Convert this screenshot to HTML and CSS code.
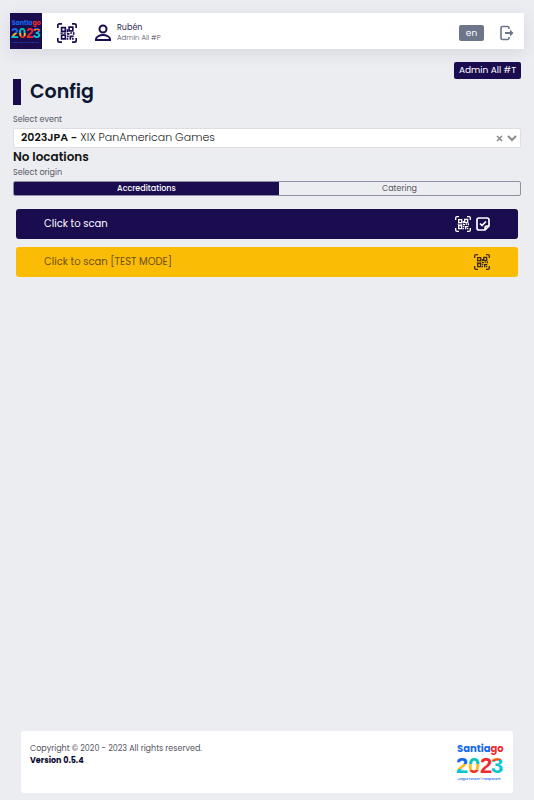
FILE: index.html
```
<!DOCTYPE html>
<html lang="en">
<head>
    <meta charset="UTF-8">
    <title>Config</title>
    <meta name="viewport" content="width=device-width, initial-scale=1.0">
    <link rel="stylesheet" href="styles.css">
</head>
<body>
    <!-- Shared icons -->
    <svg class="sprite" aria-hidden="true">
        <symbol id="icon-qr" viewBox="0 0 24 24">
            <path d="M1 6V3q0-2 2-2h3M18 1h3q2 0 2 2v3M23 18v3q0 2-2 2h-3M6 23H3q-2 0-2-2v-3" fill="none" stroke="currentColor" stroke-width="2"/>
            <path d="M5.500 5.500h4.500v4.500h-4.500zM14.500 5h4.500v4.500h-4.500zM5.500 14.500h4.500v4.500h-4.500z" fill="none" stroke="currentColor" stroke-width="2"/>
            <path d="M11.500 7.500h2v3.500h-2zM4 11.500h3v1.500H4zM8 11.500h3v1.500H8zM12 12h3v2h-3zM16 11h2v2h-2zM19 11h2v3h-2zM12 15h2v2h-2zM15 15h5v2h-5zM15 17h2v3h-2zM18 18h2v2h-2zM11.500 18h2v2h-2z" fill="currentColor"/>
        </symbol>
        <linearGradient id="n1" x1="0" y1="0" x2="0.300" y2="1">
            <stop offset="0.450" stop-color="#1268ee"/>
            <stop offset="0.450" stop-color="#fbb91e"/>
            <stop offset="0.620" stop-color="#fbb91e"/>
            <stop offset="0.620" stop-color="#08c4cc"/>
        </linearGradient>
        <linearGradient id="n2" x1="0" y1="0" x2="0" y2="1">
            <stop offset="0.420" stop-color="#08c4ba"/>
            <stop offset="0.420" stop-color="#fbbe2c"/>
            <stop offset="0.660" stop-color="#fbbe2c"/>
            <stop offset="0.660" stop-color="#f13124"/>
        </linearGradient>
        <linearGradient id="n3" x1="0" y1="0" x2="1" y2="0.300">
            <stop offset="0.500" stop-color="#1268ee"/>
            <stop offset="0.500" stop-color="#f02b2d"/>
        </linearGradient>
        <linearGradient id="n4" x1="0" y1="0" x2="0.300" y2="1">
            <stop offset="0.400" stop-color="#1268ee"/>
            <stop offset="0.400" stop-color="#f6a51e"/>
            <stop offset="0.520" stop-color="#f02b2d"/>
            <stop offset="0.520" stop-color="#08c4cc"/>
        </linearGradient>
    </svg>

    <header class="topbar">
        <a class="brand" href="#" aria-label="Santiago 2023">
            <svg class="brand-logo" viewBox="0 0 48 40">
                <text x="1" y="10" class="logo-city">Santia<tspan class="logo-go">go</tspan></text>
                <text y="31" class="logo-year"><tspan x="0" fill="url(#n1)">2</tspan><tspan x="12" fill="url(#n2)">0</tspan><tspan x="24" fill="url(#n3)">2</tspan><tspan x="35" fill="url(#n4)">3</tspan></text>
                <text x="1" y="38" class="logo-games">Juegos PanAm<tspan class="logo-go"> | </tspan>ParapanAm</text>
            </svg>
        </a>
        <button class="icon-btn" type="button" aria-label="Scan">
            <svg width="20" height="20"><use href="#icon-qr"/></svg>
        </button>
        <div class="user">
            <svg width="18" height="18" viewBox="0 0 18 18" fill="none" stroke="currentColor" stroke-width="2">
                <circle cx="9" cy="5" r="3.500"/>
                <path d="M2 16v-1c0-2 3.500-4 7-4s7 2 7 4v1z"/>
            </svg>
            <div class="user-info">
                <div class="user-name">Rubén</div>
                <div class="user-role">Admin All #P</div>
            </div>
        </div>
        <button class="lang" type="button">en</button>
        <button class="icon-btn logout" type="button" aria-label="Log out">
            <svg width="16" height="16" viewBox="0 0 16 16">
                <path d="M10 4V3q0-1.500-1.500-1.500h-5Q2 1.500 2 3v10q0 1.500 1.500 1.500h5Q10 14.500 10 13v-1" fill="none" stroke="currentColor" stroke-width="1.600"/>
                <path d="M6 7h5V4.500L14.500 8 11 11.500V9H6z" fill="currentColor"/>
            </svg>
        </button>
    </header>

    <main class="content">
        <div class="badge-row"><span class="badge">Admin All #T</span></div>
        <h1 class="title">Config</h1>

        <label class="field-label" for="event">Select event</label>
        <div class="select-box">
            <span class="select-value" aria-hidden="true"><b>2023JPA -</b> XIX PanAmerican Games</span>
            <svg width="7" height="7" viewBox="0 0 7 7" fill="none" stroke="currentColor" stroke-width="1.600">
                <path d="M1 1l5 5M6 1L1 6"/>
            </svg>
            <svg width="10" height="7" viewBox="0 0 10 7" fill="none" stroke="currentColor" stroke-width="2">
                <path d="M1 1l4 4 4-4"/>
            </svg>
            <select id="event" class="select-native">
                <option>2023JPA - XIX PanAmerican Games</option>
            </select>
        </div>

        <h2 class="subtitle">No locations</h2>

        <fieldset class="origin">
            <legend class="field-label">Select origin</legend>
            <div class="segments">
                <label class="segment"><input type="radio" name="origin" checked><span>Accreditations</span></label>
                <label class="segment"><input type="radio" name="origin"><span>Catering</span></label>
            </div>
        </fieldset>

        <div class="actions">
            <button class="btn btn-scan" type="button">
                <span>Click to scan</span>
                <svg width="16" height="16"><use href="#icon-qr"/></svg>
                <svg width="14" height="14" viewBox="0 0 14 14" fill="none" stroke="currentColor" stroke-width="1.700">
                    <path d="M9 13H3q-2 0-2-2V3q0-2 2-2h8q2 0 2 2v6zM9 13v-2q0-2 2-2h2"/>
                    <path d="M4 6.500l2 2L10 4.500"/>
                </svg>
            </button>
            <button class="btn btn-test" type="button">
                <span>Click to scan [TEST MODE]</span>
                <svg width="16" height="16"><use href="#icon-qr"/></svg>
            </button>
        </div>
    </main>

    <footer class="footer">
        <div class="footer-text">
            <div>Copyright © 2020 - 2023 All rights reserved.</div>
            <div class="version">Version 0.5.4</div>
        </div>
        <svg class="footer-logo" viewBox="0 0 48 40" role="img" aria-label="Santiago 2023">
            <text x="1" y="10" class="logo-city">Santia<tspan class="logo-go">go</tspan></text>
            <text y="31" class="logo-year"><tspan x="0" fill="url(#n1)">2</tspan><tspan x="12" fill="url(#n2)">0</tspan><tspan x="24" fill="url(#n3)">2</tspan><tspan x="35" fill="url(#n4)">3</tspan></text>
            <text x="1" y="38" class="logo-games">Juegos PanAm<tspan class="logo-go"> | </tspan>ParapanAm</text>
        </svg>
    </footer>
</body>
</html>
```
FILE: styles.css
```
:root {
    --primary: #1b0c50;
    --warning: #fbbc05;
    --background: #ecedf1;
    --muted: #6c7589;
}

* {
    box-sizing: border-box;
}

body {
    font-family: Poppins, Inter, sans-serif;
    font-size: 8px;
    line-height: 12px;
    margin: 0;
    min-height: 100vh;
    display: flex;
    flex-direction: column;
    background: var(--background);
    color: #555562;
}

svg {
    display: block;
    flex: none;
    overflow: visible;
}

button {
    font-family: inherit;
    border: none;
    cursor: pointer;
}

.sprite {
    position: absolute;
    width: 0;
    height: 0;
}

.topbar {
    display: flex;
    align-items: center;
    height: 36px;
    margin: 13px 10px 0;
    background: #fff;
    box-shadow: 0 4px 16px rgba(40, 40, 80, 0.1);
}

.brand {
    display: flex;
    align-items: center;
    justify-content: center;
    width: 32px;
    height: 36px;
    background: var(--primary);
}

.brand-logo {
    width: 30px;
    height: 25px;
}

.icon-btn {
    padding: 0;
    background: none;
    color: var(--primary);
}

.brand + .icon-btn {
    margin: 3px 0 0 15px;
}

.user {
    display: flex;
    align-items: center;
    gap: 5px;
    margin-left: 17px;
    margin-right: auto;
    padding-top: 3px;
    color: var(--primary);
}

.user-name {
    line-height: 10px;
    color: #33284f;
}

.user-role {
    font-size: 7px;
    font-weight: 300;
    line-height: 10px;
    color: #4d4a60;
}

.lang {
    width: 25px;
    height: 16px;
    margin-top: 4px;
    padding: 0;
    border-radius: 2px;
    font-size: 9px;
    line-height: 16px;
    background: var(--muted);
    color: #fff;
}

.logout {
    margin: 4px 9px 0 15px;
    color: var(--muted);
}

.content {
    padding: 13px 13px 24px;
}

.badge-row {
    display: flex;
    justify-content: flex-end;
}

.badge {
    padding: 0 5px;
    border-radius: 2px;
    font-size: 9px;
    line-height: 17px;
    background: var(--primary);
    color: #fff;
}

.title {
    margin: 0 0 9px;
    padding-left: 9px;
    border-left: 8px solid var(--primary);
    font-size: 19px;
    font-weight: 600;
    line-height: 26px;
    color: #0b1630;
}

.field-label {
    display: block;
    padding: 0;
    font-size: 8px;
    line-height: 12px;
}

.select-box {
    position: relative;
    display: flex;
    align-items: center;
    gap: 4px;
    height: 20px;
    margin-top: 2px;
    padding: 0 3px 0 7px;
    border: 1px solid #dddde3;
    border-radius: 2px;
    background: #fff;
    color: #8c8c8c;
}

.select-value {
    flex: 1;
    padding-bottom: 2px;
    font-size: 11px;
    font-weight: 300;
    color: #222;
}

.select-value b {
    font-weight: 600;
    color: #111;
}

/* the real control lies over the formatted value */
.select-native {
    position: absolute;
    inset: 0;
    width: 100%;
    opacity: 0;
    cursor: pointer;
}

.subtitle {
    margin: 0 0 2px;
    font-size: 12px;
    font-weight: 600;
    line-height: 17px;
    color: #111;
}

.origin {
    margin: 0;
    padding: 0;
    border: none;
    min-width: 0;
}

.segments {
    display: flex;
    margin-top: 2px;
    border: 1px solid #8f90a6;
    border-radius: 2px;
    overflow: hidden;
}

.segment {
    position: relative;
    flex: 1 1 auto;
    display: flex;
    cursor: pointer;
}

.segment input {
    position: absolute;
    margin: 0;
    opacity: 0;
}

.segment span {
    flex: 1;
    text-align: center;
    line-height: 13px;
}

.segment input:checked + span {
    background: var(--primary);
    color: #fff;
    font-weight: 500;
}

.actions {
    display: grid;
    gap: 8px;
    margin: 13px 3px 0;
}

.btn {
    display: flex;
    align-items: center;
    gap: 5px;
    height: 30px;
    padding: 0 28px;
    border-radius: 3px;
    font-size: 10px;
    text-align: left;
}

.btn span {
    flex: 1;
}

.btn-scan {
    background: var(--primary);
    color: #fff;
}

.btn-test {
    background: var(--warning);
    color: #3d2c13;
}

.btn-test span {
    color: #6b5012;
}

.footer {
    display: flex;
    justify-content: space-between;
    margin: auto 21px 7px;
    padding: 11px 9px;
    border-radius: 3px;
    background: #fff;
}

.footer-text {
    padding-top: 1px;
}

.version {
    font-weight: 700;
    color: #0b0b30;
}

.footer-logo {
    width: 48px;
    height: 40px;
}

.logo-city {
    font: 700 10px Poppins, Inter, sans-serif;
    fill: #1268ee;
}

.logo-year {
    font: bold 22px "Liberation Sans", sans-serif;
    stroke-width: 0;
}

.logo-games {
    font: 500 3px Poppins, Inter, sans-serif;
    fill: #1268ee;
}

.logo-city .logo-go,
.logo-games .logo-go {
    fill: #f02b2d;
}
```
